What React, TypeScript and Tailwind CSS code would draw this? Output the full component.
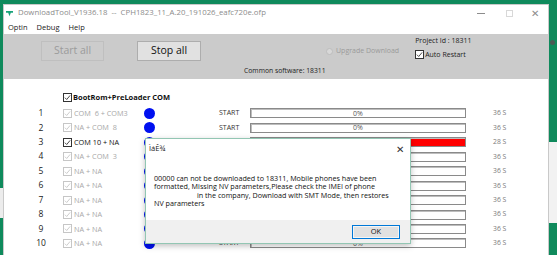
import React from 'react';

interface RowInfo {
  n: number;
  label: string;
  disabled: boolean;
  time: string;
  red?: boolean;
}

const rows: RowInfo[] = [
  { n: 1, label: 'COM  6 + COM3', disabled: true, time: '36 S' },
  { n: 2, label: 'NA + COM  8', disabled: true, time: '36 S' },
  { n: 3, label: 'COM 10 + NA', disabled: false, time: '28 S', red: true },
  { n: 4, label: 'NA + COM  3', disabled: true, time: '36 S' },
  { n: 5, label: 'NA + NA', disabled: true, time: '36 S' },
  { n: 6, label: 'NA + NA', disabled: true, time: '36 S' },
  { n: 7, label: 'NA + NA', disabled: true, time: '36 S' },
  { n: 8, label: 'NA + NA', disabled: true, time: '36 S' },
  { n: 9, label: 'NA + NA', disabled: true, time: '36 S' },
  { n: 10, label: 'NA + NA', disabled: true, time: '36 S' },
];

const CheckBox = ({ disabled }: { disabled?: boolean }) => (
  <span
    className={`inline-flex h-[9px] w-[9px] shrink-0 items-center justify-center border bg-white ${
      disabled ? 'border-[#c6c6c6]' : 'border-[#333333]'
    }`}
  >
    <svg viewBox="0 0 8 8" className="h-[7px] w-[7px]">
      <path
        d="M1 4.2 L3.1 6.3 L7 1.6"
        fill="none"
        stroke={disabled ? '#c6c6c6' : '#333333'}
        strokeWidth="1"
      />
    </svg>
  </span>
);

const ProgressRow = ({ row }: { row: RowInfo }) => (
  <div className="flex h-[14.44px] items-center">
    {/* index */}
    <span className="w-[20px] text-center text-[8.5px] text-[#222]">{row.n}</span>
    <span className="ml-[12px] flex w-[81px] items-center gap-[2px]">
      <CheckBox disabled={row.disabled} />
      <span className={`whitespace-pre text-[7.3px] ${row.disabled ? 'text-[#a8a8a8]' : 'text-[#111]'}`}>
        {row.label}
      </span>
    </span>
    <span className="h-[11px] w-[11px] rounded-full bg-[#0010f0]" />
    <span className="ml-[64px] w-[31px] text-[7px] text-[#333]">START</span>
    {/* progress */}
    <div
      className={`flex h-[10px] w-[216px] items-center justify-center border border-[#8a8a8a] shadow-[inset_1px_1px_0_#bdbdbd] ${
        row.red ? 'bg-[#ff0000]' : 'bg-white'
      }`}
    >
      {!row.red && <span className="text-[7px] leading-none text-[#555]">0%</span>}
    </div>
    <span className="ml-[27px] text-[6.8px] text-[#7a7a7a]">{row.time}</span>
  </div>
);

export default function App() {
  return (
    <div className="relative h-[255px] w-[557px] overflow-hidden bg-[#0f8a5c] font-['Open_Sans','Noto_Sans',sans-serif]">
      {/* windows behind */}
      <div className="absolute left-0 top-[188px] h-[30px] w-[3px] bg-[#ececec]" />
      <div className="absolute left-[549px] top-[142px] h-[81px] w-[8px] bg-[#f2f2f2]" />
      <div className="absolute left-[550px] top-[40px] h-[5px] w-[5px] rounded-sm bg-[#4a5a55]" />

      {/* main window */}
      <div className="absolute left-[3px] top-[4px] h-[260px] w-[546px] border border-[#c9c9c9] bg-white">
        {/* title bar */}
        <div className="flex h-[16px] items-center">
          <svg viewBox="0 0 8 8" className="ml-[2px] h-[7px] w-[7px]">
            <path d="M0 1 H8 V3 H5.5 L4 7 L2.5 3 H0 Z" fill="#1aa37a" />
          </svg>
          <span className="ml-[5px] whitespace-pre text-[7.8px] text-[#8c8c8c]">
            DownloadTool_V1936.18  --  CPH1823_11_A.20_191026_eafc720e.ofp
          </span>
          <span className="ml-auto w-[8px] border-t border-[#8c8c8c]" />
          <span className="ml-[21px] h-[7px] w-[7px] border border-[#d8d8d8]" />
          <span className="ml-[18px] mr-[9px] text-[10px] leading-none text-[#8c8c8c]">✕</span>
        </div>

        {/* menu */}
        <div className="flex h-[13px] items-center gap-[9px] pl-[4px] text-[7.5px] text-[#222]">
          <span>Optin</span>
          <span>Debug</span>
          <span>Help</span>
        </div>

        {/* toolbar */}
        <div className="h-[45px] bg-[#cbcbcb] pt-[7px]">
          <div className="flex items-start">
            <button className="ml-[37px] h-[20px] w-[63px] border border-[#bfbfbf] bg-[#cccccc] text-[10.5px] text-[#9b9b9b]">
              Start all
            </button>
            <button className="ml-[33px] h-[20px] w-[64px] border border-[#adadad] bg-[#e1e1e1] text-[10.5px] text-[#111]">
              Stop all
            </button>
            <div className="ml-[125px] mt-[5px] flex items-center gap-[3px]">
              <span className="h-[7px] w-[7px] rounded-full border border-[#bdbdbd] bg-[#d8d8d8]" />
              <span className="text-[7px] text-[#9a9a9a]">Upgrade Download</span>
            </div>
            <div className="ml-[16px] mt-[-5px] flex flex-col gap-[3px]">
              <span className="text-[7px] text-[#222]">Project Id : 18311</span>
              <span className="flex items-center gap-[1px]">
                <CheckBox />
                <span className="text-[7px] text-[#222]">Auto Restart</span>
              </span>
            </div>
          </div>
          <div className="ml-[240px] mt-[5px] text-[6.8px] text-[#222]">Common software: 18311</div>
        </div>

        {/* content */}
        <div className="pt-[13px]">
          <div className="ml-[59px] flex items-center gap-[1px]">
            <CheckBox />
            <span className="text-[7.5px] font-bold text-[#111]">BootRom+PreLoader COM</span>
          </div>
          <div className="mt-[3px] pl-[27px]">
            {rows.map((r) => (
              <ProgressRow key={r.n} row={r} />
            ))}
          </div>
        </div>
      </div>

      {/* message box */}
      <div className="absolute left-[145px] top-[138px] flex h-[106px] w-[266px] flex-col border border-[#92c6b3] bg-white shadow-[0_2px_6px_rgba(0,0,0,0.25)]">
        <div className="flex h-[20px] items-center justify-between pl-[3px] pr-[6px]">
          <span className="text-[7.5px] text-[#222]">ÌáÊ¾</span>
          <span className="text-[10px] leading-none text-[#333]">✕</span>
        </div>
        <div className="flex-1 whitespace-pre pl-[8px] pt-[15px] text-[7.2px] leading-[8.4px] text-[#111]">
          {'00000 can not be downloaded to 18311, Mobile phones have been\nformatted, Missing NV parameters,Please check the IMEI of phone\n                       in the company, Download with SMT Mode, then restores\nNV parameters'}
        </div>
        <div className="flex h-[23px] items-center justify-end bg-[#f0f0f0] pr-[10px]">
          <button className="h-[14px] w-[48px] border border-[#0078d7] bg-[#e1e1e1] text-[7.5px] text-[#111] shadow-[inset_0_0_0_1px_#f5f5f5]">
            OK
          </button>
        </div>
      </div>
    </div>
  );
}
